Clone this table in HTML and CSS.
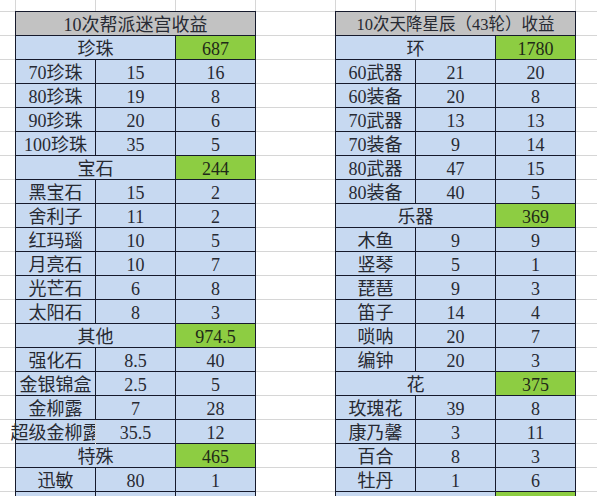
FILE: index.html
```html
<!DOCTYPE html>
<html lang="zh-CN">
<head>
<meta charset="utf-8">
<title>收益表</title>
<link rel="stylesheet" href="styles.css">
</head>
<body>
<div class="sheet">
  <div class="table">
    <div class="cell title">10次帮派迷宫收益</div>
    <div class="cell head">珍珠</div><div class="cell sum">687</div>
    <div class="cell">70珍珠</div><div class="cell">15</div><div class="cell">16</div>
    <div class="cell">80珍珠</div><div class="cell">19</div><div class="cell">8</div>
    <div class="cell">90珍珠</div><div class="cell">20</div><div class="cell">6</div>
    <div class="cell">100珍珠</div><div class="cell">35</div><div class="cell">5</div>
    <div class="cell head">宝石</div><div class="cell sum">244</div>
    <div class="cell">黑宝石</div><div class="cell">15</div><div class="cell">2</div>
    <div class="cell">舍利子</div><div class="cell">11</div><div class="cell">2</div>
    <div class="cell">红玛瑙</div><div class="cell">10</div><div class="cell">5</div>
    <div class="cell">月亮石</div><div class="cell">10</div><div class="cell">7</div>
    <div class="cell">光芒石</div><div class="cell">6</div><div class="cell">8</div>
    <div class="cell">太阳石</div><div class="cell">8</div><div class="cell">3</div>
    <div class="cell head">其他</div><div class="cell sum">974.5</div>
    <div class="cell">强化石</div><div class="cell">8.5</div><div class="cell">40</div>
    <div class="cell">金银锦盒</div><div class="cell">2.5</div><div class="cell">5</div>
    <div class="cell">金柳露</div><div class="cell">7</div><div class="cell">28</div>
    <div class="cell wide">超级金柳露</div><div class="cell">35.5</div><div class="cell">12</div>
    <div class="cell head">特殊</div><div class="cell sum">465</div>
    <div class="cell">迅敏</div><div class="cell">80</div><div class="cell">1</div>
    <div class="cell"></div><div class="cell"></div><div class="cell"></div>
  </div>
  <div class="table">
    <div class="cell title title-long">10次天降星辰（43轮）收益</div>
    <div class="cell head">环</div><div class="cell sum">1780</div>
    <div class="cell">60武器</div><div class="cell">21</div><div class="cell">20</div>
    <div class="cell">60装备</div><div class="cell">20</div><div class="cell">8</div>
    <div class="cell">70武器</div><div class="cell">13</div><div class="cell">13</div>
    <div class="cell">70装备</div><div class="cell">9</div><div class="cell">14</div>
    <div class="cell">80武器</div><div class="cell">47</div><div class="cell">15</div>
    <div class="cell">80装备</div><div class="cell">40</div><div class="cell">5</div>
    <div class="cell head">乐器</div><div class="cell sum">369</div>
    <div class="cell">木鱼</div><div class="cell">9</div><div class="cell">9</div>
    <div class="cell">竖琴</div><div class="cell">5</div><div class="cell">1</div>
    <div class="cell">琵琶</div><div class="cell">9</div><div class="cell">3</div>
    <div class="cell">笛子</div><div class="cell">14</div><div class="cell">4</div>
    <div class="cell">唢呐</div><div class="cell">20</div><div class="cell">7</div>
    <div class="cell">编钟</div><div class="cell">20</div><div class="cell">3</div>
    <div class="cell head">花</div><div class="cell sum">375</div>
    <div class="cell">玫瑰花</div><div class="cell">39</div><div class="cell">8</div>
    <div class="cell">康乃馨</div><div class="cell">3</div><div class="cell">11</div>
    <div class="cell">百合</div><div class="cell">8</div><div class="cell">3</div>
    <div class="cell">牡丹</div><div class="cell">1</div><div class="cell">6</div>
    <div class="cell head"></div><div class="cell sum"></div>
  </div>
</div>
</body>
</html>
```
FILE: styles.css
```css
html, body {
  margin: 0;
  padding: 0;
}
body {
  width: 597px;
  height: 496px;
  overflow: hidden;
  background-color: #ffffff;
  background-image:
    linear-gradient(to right, #d6d6d6 1px, transparent 1px),
    linear-gradient(to bottom, #d6d6d6 1px, transparent 1px);
  background-size: 80px 24px;
  background-position: 15px 11px;
  font-family: "Liberation Serif", "Noto Sans CJK SC", serif;
  font-size: 18px;
  color: #272a33;
}
.sheet {
  display: flex;
  gap: 79px;
  padding: 11px 0 0 15px;
}
.table {
  display: grid;
  grid-template-columns: repeat(3, 80px);
  grid-auto-rows: 24px;
  border-left: 1px solid #161a2c;
  border-top: 1px solid #161a2c;
}
.cell {
  box-sizing: border-box;
  display: flex;
  align-items: center;
  justify-content: center;
  padding-top: 3px;
  white-space: nowrap;
  background: #c7d9f1;
  border-right: 1px solid #161a2c;
  border-bottom: 1px solid #161a2c;
  line-height: 1;
}
.title {
  grid-column: span 3;
  background: #c2c2c2;
}
.title-long {
  font-size: 16.5px;
}
.head {
  grid-column: span 2;
}
.sum {
  background: #8dcd42;
  color: #1f2a18;
}
.wide {
  clip-path: inset(0 1px 0 -20px);
}
```
